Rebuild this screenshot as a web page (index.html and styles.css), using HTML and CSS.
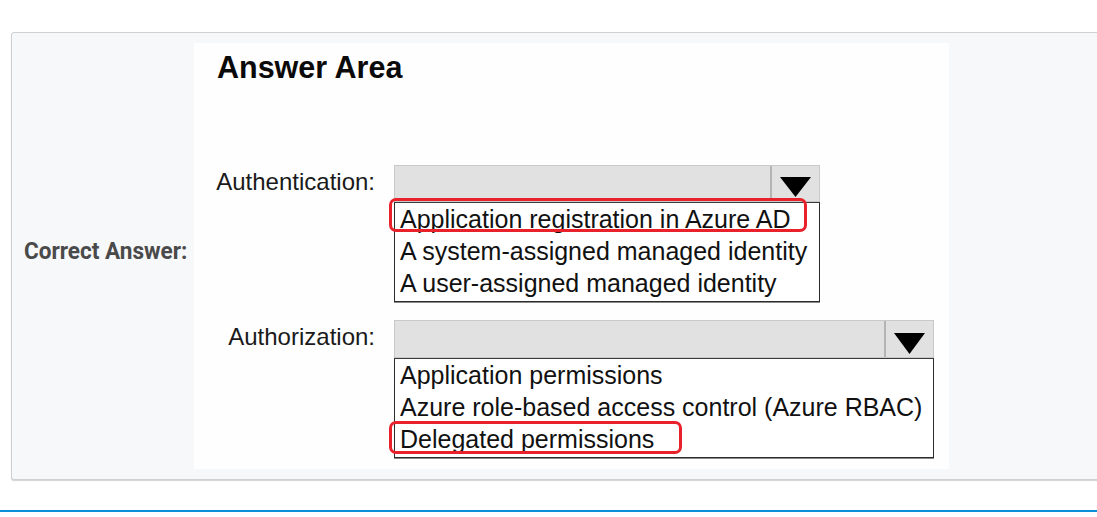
FILE: index.html
```html
<!DOCTYPE html>
<html lang="en">
<head>
<meta charset="utf-8">
<title>Correct Answer</title>
<link rel="stylesheet" href="styles.css">
</head>
<body>
<div class="page">
  <div class="card">
    <div class="label-col"><span class="correct">Correct Answer:</span></div>
    <div class="answer">
      <div class="title">Answer Area</div>
      <div class="row row-auth">
        <div class="field-label">Authentication:</div>
        <div class="dropdown dd-1">
          <div class="dd-head">
            <div class="dd-space"></div>
            <div class="dd-arrow"><svg width="31" height="20" viewBox="0 0 31 20"><polygon points="0,0 31,0 15.5,20" fill="#000"/></svg></div>
          </div>
          <div class="dd-list">
            <div class="item item-mark1">Application registration in Azure AD</div>
            <div class="item">A system-assigned managed identity</div>
            <div class="item">A user-assigned managed identity</div>
          </div>
        </div>
      </div>
      <div class="row row-authz">
        <div class="field-label">Authorization:</div>
        <div class="dropdown dd-2">
          <div class="dd-head">
            <div class="dd-space"></div>
            <div class="dd-arrow"><svg width="31" height="21" viewBox="0 0 31 21"><polygon points="0,0 31,0 15.5,21" fill="#000"/></svg></div>
          </div>
          <div class="dd-list">
            <div class="item">Application permissions</div>
            <div class="item">Azure role-based access control (Azure RBAC)</div>
            <div class="item item-mark2">Delegated permissions</div>
          </div>
        </div>
      </div>
    </div>
  </div>
  <div class="rule"></div>
</div>
</body>
</html>
```
FILE: styles.css
```css
html, body {
  margin: 0;
  padding: 0;
  background: #ffffff;
  overflow: hidden;
}
.page {
  padding: 32px 0 0 11px;
  width: 1097px;
  box-sizing: border-box;
}
.card {
  display: flex;
  align-items: center;
  width: 1100px;
  box-sizing: border-box;
  border: 1px solid #cfd0d2;
  border-radius: 3px;
  background: #f7f8fa;
  padding: 10px 0;
  box-shadow: 0 1px 1px rgba(0, 0, 0, 0.18);
}
.label-col {
  width: 182px;
  box-sizing: border-box;
  padding-left: 12px;
  padding-bottom: 10px;
}
.correct {
  display: inline-block;
  font-family: "Roboto", "Liberation Sans", sans-serif;
  font-weight: 700;
  font-size: 24px;
  color: #4a4a4a;
  transform: scaleX(0.94);
  transform-origin: left center;
  white-space: nowrap;
}
.answer {
  width: 755px;
  height: 426px;
  background: #fefefe;
  box-sizing: border-box;
  padding-top: 6px;
  font-family: "Liberation Sans", Arial, sans-serif;
  color: #111;
}
.title {
  margin-left: 23px;
  font-size: 30.5px;
  font-weight: 700;
  line-height: 36px;
  color: #0a0a0a;
}
.row {
  display: flex;
  align-items: flex-start;
  gap: 19px;
}
.row-auth {
  margin-top: 80px;
}
.row-authz {
  margin-top: 18px;
}
.field-label {
  width: 181px;
  text-align: right;
  font-size: 24px;
  line-height: 33px;
  color: #1a1a1a;
}
.dd-1 { width: 426px; }
.dd-2 { width: 540px; }
.dd-head {
  display: flex;
  height: 37px;
  box-sizing: border-box;
  border: 1px solid #c9c9c9;
  background: #e1e1e1;
}
.dd-space {
  flex: 1;
}
.dd-arrow {
  width: 49px;
  border-left: 2px solid #b4b4b4;
  display: flex;
  justify-content: center;
  padding-top: 11px;
  box-sizing: border-box;
}
.dd-2 .dd-head { height: 38px; }
.dd-2 .dd-arrow { padding-top: 12px; }
.dd-list {
  border: 1px solid #2b2b2b;
  border-top-color: #3a3a3a;
  background: #ffffff;
  padding: 0 0 2px 5px;
  box-shadow: 0 1px 0 #8a8a8a;
}
.item {
  position: relative;
  font-size: 25px;
  line-height: 32px;
  height: 32px;
  white-space: nowrap;
  color: #111;
}
.item-mark1::before,
.item-mark2::before {
  content: "";
  position: absolute;
  border: 3px solid #e8212b;
  border-radius: 7px;
  box-sizing: border-box;
}
.item-mark1::before {
  left: -11px;
  top: -5px;
  width: 418px;
  height: 34px;
}
.item-mark2::before {
  left: -11px;
  top: -2px;
  width: 293px;
  height: 33px;
}
.rule {
  margin-top: 30px;
  height: 2px;
  background: #0c8fd8;
  width: 1097px;
  margin-left: -11px;
}
```
